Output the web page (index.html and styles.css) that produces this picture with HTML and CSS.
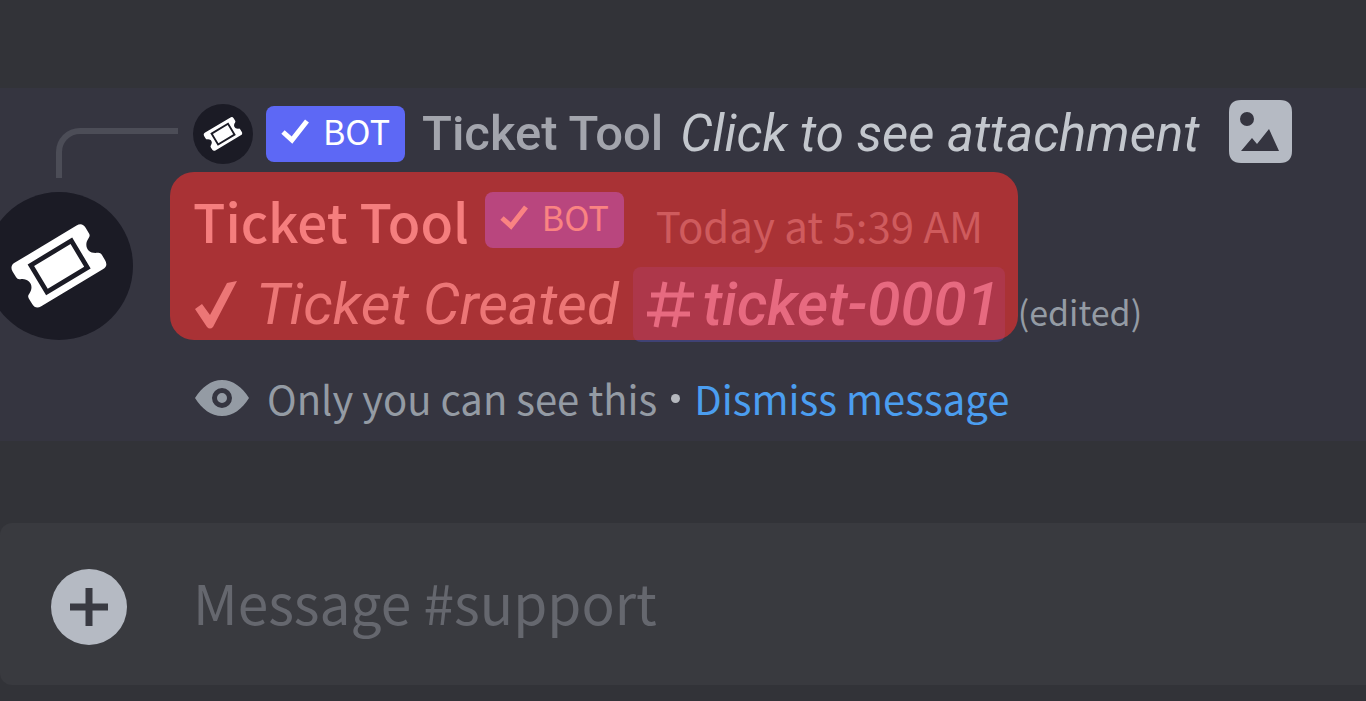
FILE: index.html
```
<!DOCTYPE html>
<html lang="en">
<head>
<meta charset="utf-8">
<title>#support</title>
<link rel="stylesheet" href="styles.css">
</head>
<body>
<svg class="defs" aria-hidden="true">
  <symbol id="ticket" viewBox="0 0 148 148">
    <g transform="rotate(-31 74 74) translate(4 4) scale(.945)">
      <path fill="#fff" d="M36 47H112Q119 47 119 54V61Q119 64 116 65C107 69 107 79 116 83Q119 84 119 87V94Q119 101 112 101H36Q29 101 29 94V87Q29 84 32 83C41 79 41 69 32 65Q29 64 29 61V54Q29 47 36 47Z"/>
      <rect x="49" y="58" width="50" height="33" fill="none" stroke="#1b1b25" stroke-width="5"/>
    </g>
  </symbol>
  <symbol id="check" viewBox="0 0 28 26">
    <path d="M2 14L11 22L26 3" fill="none" stroke="currentColor" stroke-width="5"/>
  </symbol>
</svg>
<main class="chat">
  <article class="message">
    <div class="gutter">
      <div class="spine"></div>
      <svg class="avatar" role="img" aria-label="Ticket Tool avatar"><use href="#ticket"/></svg>
    </div>
    <div class="content">
      <div class="reply">
        <svg class="reply-avatar" aria-hidden="true"><use href="#ticket"/></svg>
        <span class="badge"><svg class="badge-check" aria-hidden="true"><use href="#check"/></svg>BOT</span>
        <span class="reply-name">Ticket Tool</span>
        <span class="reply-text">Click to see attachment</span>
        <svg class="image-icon" viewBox="0 0 63 63" aria-hidden="true">
          <path fill="#b5bac3" fill-rule="evenodd" d="M12 0H51Q63 0 63 12V51Q63 63 51 63H12Q0 63 0 51V12Q0 0 12 0ZM18 12A7 7 0 1 0 18 26A7 7 0 1 0 18 12ZM12 51H50L40 29L28 44L23 38Z"/>
        </svg>
      </div>
      <div class="body">
        <div class="marked">
          <header class="header">
            <span class="name">Ticket Tool</span>
            <span class="badge"><svg class="badge-check" aria-hidden="true"><use href="#check"/></svg>BOT</span>
            <time class="time">Today at 5:39 AM</time>
          </header>
          <div class="line">
            <svg class="big-check" viewBox="0 0 47 50" aria-hidden="true"><path fill="currentColor" d="M2 29L9 24L17 35L34 3L44 1L20 47Q17 50 14 47Z"/></svg>
            <span class="created">Ticket Created</span>
            <a class="mention" href="#ticket-0001">
              <svg class="hash" viewBox="0 0 48 48" aria-hidden="true"><path d="M18 1L9 46M36 1L27 46M4 14H47M0 33H43" fill="none" stroke="currentColor" stroke-width="5"/></svg>ticket-0001</a>
          </div>
        </div>
        <span class="edited">(edited)</span>
      </div>
      <div class="notice">
        <svg class="eye" viewBox="0 0 54 36" aria-hidden="true">
          <path fill="currentColor" fill-rule="evenodd" d="M0 18C7 7 16 0 27 0S47 7 54 18C47 29 38 36 27 36S7 29 0 18ZM27 8A10 10 0 1 0 27 28A10 10 0 1 0 27 8ZM27 13A5 5 0 1 1 27 23A5 5 0 1 1 27 13Z"/>
        </svg>
        <span class="only">Only you can see this</span>
        <span class="dot"></span>
        <a class="dismiss" href="#dismiss">Dismiss message</a>
      </div>
    </div>
  </article>
  <form class="composer">
    <button class="add" type="button" aria-label="Add attachment">
      <svg class="plus" viewBox="0 0 38 38" aria-hidden="true"><path d="M19 0V38M0 19H38" stroke="currentColor" stroke-width="7"/></svg>
    </button>
    <input class="input" type="text" aria-label="Message #support" placeholder="Message #support">
  </form>
</main>
</body>
</html>
```
FILE: styles.css
```
* { box-sizing: border-box; }
body {
  margin: 0;
  background: #323338;
  color: #f2f3f5;
  font-family: "Noto Sans CJK SC", "Noto Sans", sans-serif;
  overflow-x: hidden;
}
.defs { display: none; }
.chat { padding: 88px 0 16px; }
.message {
  display: flex;
  background: #353540;
}
.gutter { flex: 0 0 193px; }
.spine {
  width: 122px;
  height: 50px;
  margin: 40px 0 0 56px;
  border: solid #4c4d57;
  border-width: 6px 0 0 6px;
  border-radius: 24px 0 0 0;
}
.avatar {
  display: block;
  width: 148px;
  height: 148px;
  margin: 14px 0 0 -15px;
  border-radius: 50%;
  background: #1b1b25;
}
.content {
  flex: 1;
  min-width: 0;
  padding: 12px 0 18px;
  white-space: nowrap;
}
.reply {
  display: flex;
  align-items: center;
  height: 68px;
}
.reply-avatar {
  flex: none;
  width: 60px;
  height: 60px;
  margin-right: 13px;
  border-radius: 50%;
  background: #1b1b25;
}
.badge {
  display: flex;
  align-items: center;
  align-self: center;
  height: 56px;
  padding: 0 15px 6px;
  gap: 14px;
  border-radius: 8px;
  background: #5d68f5;
  color: #fff;
  font-size: 34px;
  line-height: 50px;
}
.badge-check { width: 28px; height: 26px; }
.reply-name {
  margin-left: 17px;
  color: #a3a5ad;
  font: 500 49px/60px Roboto, sans-serif;
}
.reply-text {
  margin-left: 17px;
  color: #c3c7cd;
  font: italic 400 51px/60px Roboto, sans-serif;
}
.image-icon {
  width: 63px;
  height: 63px;
  margin-left: 30px;
  align-self: flex-start;
}
.body {
  display: flex;
  align-items: flex-end;
  margin-top: 18px;
}
.marked { position: relative; }
.marked::after {
  content: "";
  position: absolute;
  inset: -14px -13px 2px -23px;
  border-radius: 24px;
  background: rgba(246, 48, 47, 0.6);
  pointer-events: none;
}
.header {
  display: flex;
  align-items: baseline;
  height: 68px;
}
.name {
  font-size: 53px;
  font-weight: 500;
  line-height: 68px;
}
.header .badge { margin-left: 16px; }
.time {
  margin-left: 32px;
  color: #949ba4;
  font-size: 42px;
  line-height: 50px;
}
.line {
  display: flex;
  align-items: center;
  margin-top: 13px;
  color: #dbdee1;
  font: italic 400 58px/75px Roboto, sans-serif;
}
.big-check { width: 47px; height: 50px; }
.created { margin: 0 14px 0 16px; }
.mention {
  display: flex;
  align-items: center;
  gap: 8px;
  padding: 0 5px 0 14px;
  border-radius: 8px;
  background: #404274;
  color: #cfc0fb;
  font-size: 60px;
  font-weight: 500;
  text-decoration: none;
}
.hash { width: 48px; height: 48px; }
.edited {
  margin-left: 13px;
  color: #949ba4;
  font-size: 34px;
  line-height: 60px;
}
.notice {
  display: flex;
  align-items: center;
  margin-top: 31px;
  color: #949ba4;
  font-size: 40px;
  line-height: 50px;
}
.eye { width: 54px; height: 36px; margin: 0 18px 0 2px; }
.dot {
  width: 9px;
  height: 9px;
  margin: 0 14px;
  border-radius: 50%;
  background: #b5b8be;
}
.dismiss { color: #4b9ef0; text-decoration: none; }
.composer {
  display: flex;
  align-items: center;
  margin: 82px 0 0;
  padding: 46px 0 40px 51px;
  border-radius: 12px 0 0 12px;
  background: #393a3f;
}
.add {
  display: grid;
  place-items: center;
  flex: none;
  width: 76px;
  height: 76px;
  padding: 0;
  border: 0;
  border-radius: 50%;
  background: #b5bac3;
  color: #393a42;
}
.plus { width: 38px; height: 38px; }
.input {
  flex: 1;
  min-width: 0;
  height: 76px;
  margin-left: 66px;
  padding: 0 0 12px;
  border: 0;
  outline: 0;
  background: transparent;
  color: #dbdee1;
  font: 400 55px/64px "Noto Sans CJK SC", "Noto Sans", sans-serif;
}
.input::placeholder { color: #65676e; opacity: 1; }
```
